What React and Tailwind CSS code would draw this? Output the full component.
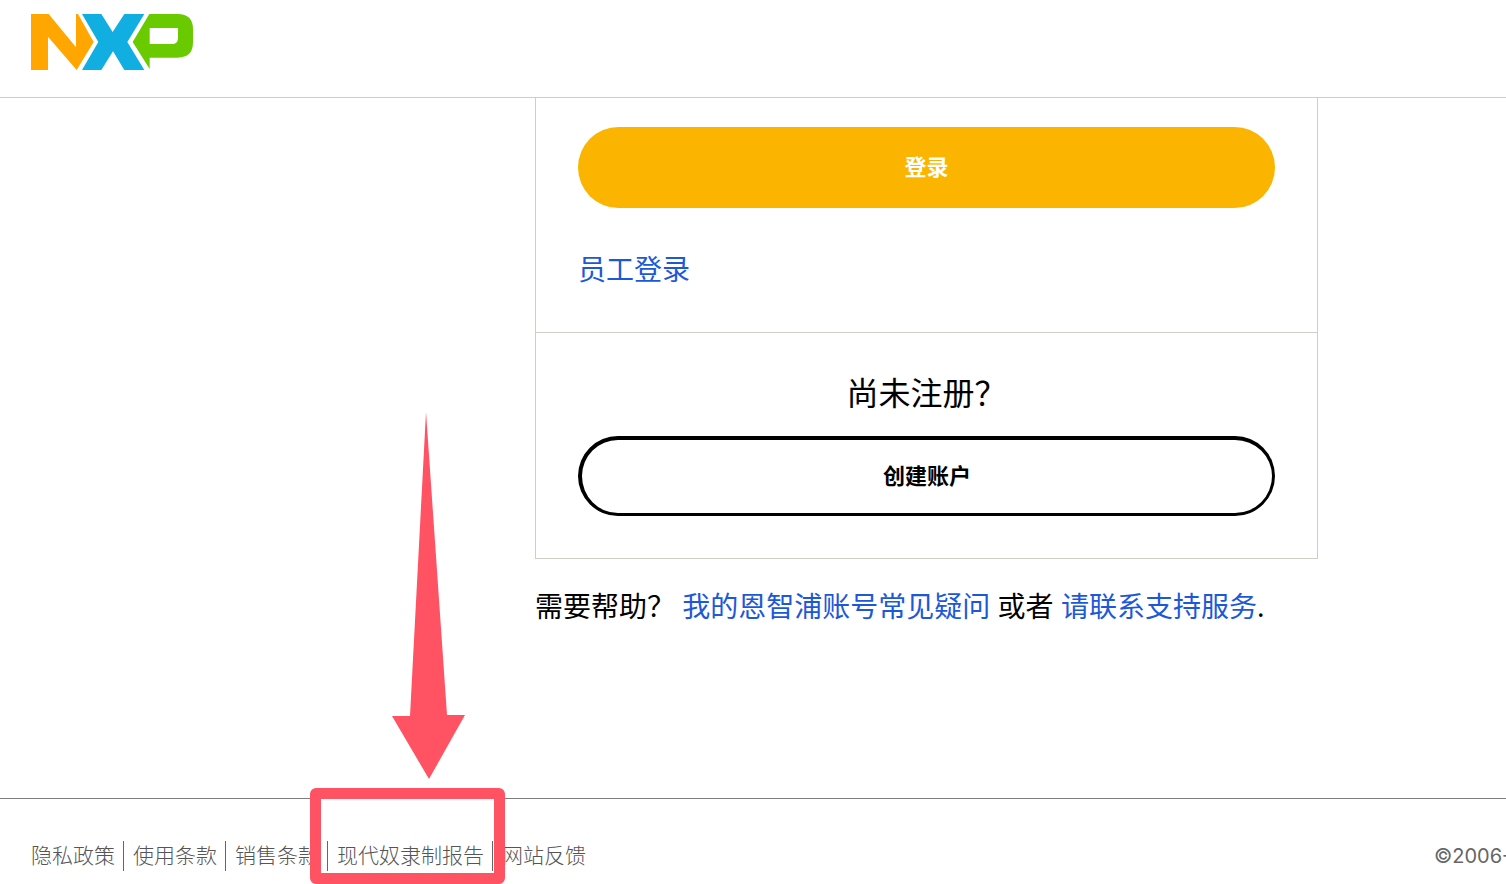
import React from "react";

const footerLinks = [
  "隐私政策",
  "使用条款",
  "销售条款",
  "现代奴隶制报告",
  "网站反馈",
];

const Logo = () => (
  <svg viewBox="33 42 486 168" className="w-[162px] h-14" aria-label="NXP">
    <path
      fill="#ffa600"
      d="M33 42H86L168 142V42H174L221 126L170 210L84 110V210H33Z"
    />
    <path
      fill="#11aee2"
      d="M186 42H244L278 96L313 42H373L322 126L373 210H313L279 154L244 210H186L235 126Z"
    />
    <path
      fill="#69ca00"
      fillRule="evenodd"
      d="M388 42H473Q519 42 519 88V127Q519 173 473 173H389V207L338 126ZM389 84V132H456Q474 132 474 114V84Z"
    />
  </svg>
);

const Header = () => (
  <header className="h-[98px] border-b border-[#d1cdc4] pl-[31px] pt-[14px]">
    <a href="#" className="inline-block">
      <Logo />
    </a>
  </header>
);

const LoginCard = () => (
  <div className="border border-t-0 border-[#d1cdc4]">
    <div className="px-[42px] pt-[29px] pb-[42px] border-b border-[#d1cdc4]">
      <button
        type="button"
        className="block w-full h-[81px] pb-0.5 rounded-full bg-[#fbb500] text-white text-[22px] font-bold"
      >
        登录
      </button>
      <a
        href="#"
        className="inline-block align-top mt-10 text-[28px] leading-[42px] text-[#1d58d8]"
      >
        员工登录
      </a>
    </div>
    <div className="px-[42px] pt-9 pb-[42px] text-center">
      <h2 className="text-[32px] leading-[48px] mb-[19px]">尚未注册？</h2>
      <button
        type="button"
        className="block w-full h-20 pb-0.5 rounded-full border-3 border-t-4 border-l-4 border-black text-[22px] font-bold"
      >
        创建账户
      </button>
    </div>
  </div>
);

const Footer = () => (
  <footer className="flex justify-between border-t border-[#7d7d7d] pl-[31px] pt-[42px] pb-[13px] text-[21px] text-[#666666]">
    <nav className="flex font-light leading-[28px] text-[#555555]">
      {footerLinks.map((item, index) => (
        <a
          key={item}
          href="#"
          className={
            index < footerLinks.length - 1
              ? "pb-0.5 pr-2 mr-[9px] border-r border-[#666666]"
              : "pb-0.5"
          }
        >
          {item}
        </a>
      ))}
    </nav>
    <p className="w-[72px] overflow-hidden whitespace-nowrap text-[20px] leading-[30px] font-['Inter',sans-serif]">
      ©2006-
    </p>
  </footer>
);

// Red arrow and frame pointing at the report link
const Callout = () => (
  <div className="pointer-events-none">
    <svg
      viewBox="392 412 73 367"
      className="absolute left-[392px] bottom-[105px] w-[73px] h-[367px]"
      aria-hidden="true"
    >
      <path fill="#ff5263" d="M426 412L447 715H465L429 779L392 716H410Z" />
    </svg>
    <div className="absolute left-[310px] bottom-0 w-[195px] h-24 rounded-md border-11 border-[#ff5263]" />
  </div>
);

const App = () => {
  return (
    <div
      lang="zh-CN"
      className="relative overflow-hidden bg-white text-black font-['Noto_Sans','Noto_Sans_CJK_SC',sans-serif]"
    >
      <Header />
      <main className="pl-[535px] pr-[188px] pb-[171px]">
        <LoginCard />
        <p className="mt-[26px] text-[28px] leading-[42px]">
          需要帮助？{" "}
          <a href="#" className="text-[#1d58d8]">
            我的恩智浦账号常见疑问
          </a>{" "}
          或者{" "}
          <a href="#" className="text-[#1d58d8]">
            请联系支持服务
          </a>
          .
        </p>
      </main>
      <Footer />
      <Callout />
    </div>
  );
};

export default App;
